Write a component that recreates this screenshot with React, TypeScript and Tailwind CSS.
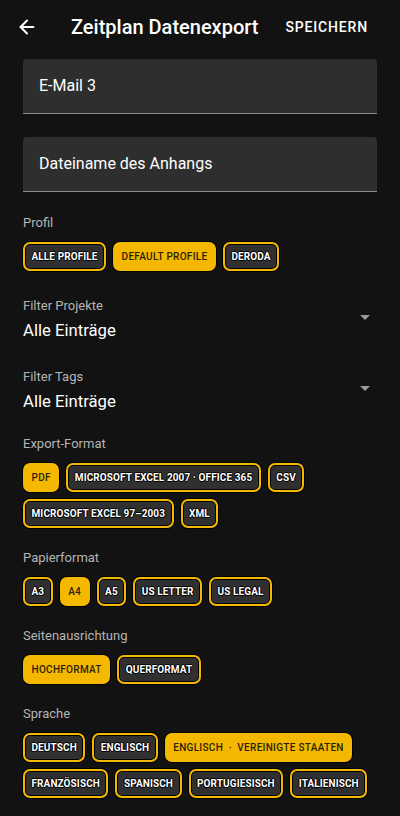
import { ArrowLeft } from "lucide-react"

const font = { fontFamily: "Roboto, 'Noto Sans', sans-serif" }

function Chip({ label, active }: { label: string; active?: boolean }) {
    if (active) {
        return (
            <span className="inline-flex h-[29px] items-center rounded-[7px] bg-[#f5b800] px-[8.5px] text-[10px] font-medium tracking-[0.03em] text-[#2b2300] shadow-[0_0_0_1px_#000] whitespace-pre">
                {label}
            </span>
        )
    }
    return (
        <span className="inline-flex h-[29px] items-center rounded-[7px] border-2 border-[#f5b800] bg-[#303030] px-[6.5px] text-[10px] font-bold tracking-[0.01em] text-white shadow-[inset_0_0_0_1px_#000,0_0_0_1px_#000] [text-shadow:-1px_0_#000,1px_0_#000,0_-1px_#000,0_1px_#000]">
            {label}
        </span>
    )
}

function Label({ children }: { children: string }) {
    return <div className="text-[13px] leading-[16px] text-[#b5b5b5]">{children}</div>
}

function Chips({ items, active }: { items: string[]; active: string }) {
    return (
        <div className="mt-[11px] flex flex-wrap gap-[7px]">
            {items.map((i) => (
                <Chip key={i} label={i} active={i === active} />
            ))}
        </div>
    )
}

function Dropdown({ label, value, className }: { label: string; value: string; className: string }) {
    return (
        <div className={"flex items-center " + className}>
            <div className="flex-1">
                <Label>{label}</Label>
                <div className="mt-[5px] text-[16.7px] leading-[24px] text-white">{value}</div>
            </div>
            <svg width="10" height="5" viewBox="0 0 10 5" className="mr-[7px] mb-[6px]">
                <path d="M0 0h10L5 5z" fill="#9a9a9a" />
            </svg>
        </div>
    )
}

export default function App() {
    return (
        <div className="min-h-[816px] w-[400px] bg-[#121212] pb-4" style={font}>
            <header className="flex h-[54px] items-center pl-4 pr-8">
                <ArrowLeft size={22} strokeWidth={2.2} className="text-white" />
                <h1 className="ml-[33px] flex-1 text-[20px] font-medium text-white">Zeitplan Datenexport</h1>
                <button className="text-[14px] font-medium tracking-[0.06em] text-white">SPEICHERN</button>
            </header>

            <div className="mt-[5px] px-[23px]">
                <div className="flex h-[55px] items-center rounded-t-[4px] border-b border-[#8a8a8a] bg-[#2e2e2e] px-4 text-[16px] text-white">
                    E-Mail 3
                </div>
                <div className="mt-[23px] flex h-[55px] items-center rounded-t-[4px] border-b border-[#8a8a8a] bg-[#2e2e2e] px-4 text-[16px] text-white">
                    Dateiname des Anhangs
                </div>

                <div className="mt-[23px]">
                    <Label>Profil</Label>
                    <Chips items={["ALLE PROFILE", "DEFAULT PROFILE", "DERODA"]} active="DEFAULT PROFILE" />
                </div>

                <Dropdown label="Filter Projekte" value="Alle Einträge" className="mt-[27px]" />
                <Dropdown label="Filter Tags" value="Alle Einträge" className="mt-[26px]" />

                <div className="mt-[22px]">
                    <Label>Export-Format</Label>
                    <Chips
                        items={["PDF", "MICROSOFT EXCEL 2007 · OFFICE 365", "CSV", "MICROSOFT EXCEL 97–2003", "XML"]}
                        active="PDF"
                    />
                </div>

                <div className="mt-[22px]">
                    <Label>Papierformat</Label>
                    <Chips items={["A3", "A4", "A5", "US LETTER", "US LEGAL"]} active="A4" />
                </div>

                <div className="mt-[22px]">
                    <Label>Seitenausrichtung</Label>
                    <Chips items={["HOCHFORMAT", "QUERFORMAT"]} active="HOCHFORMAT" />
                </div>

                <div className="mt-[22px]">
                    <Label>Sprache</Label>
                    <Chips
                        items={[
                            "DEUTSCH",
                            "ENGLISCH",
                            "ENGLISCH  ·  VEREINIGTE STAATEN",
                            "FRANZÖSISCH",
                            "SPANISCH",
                            "PORTUGIESISCH",
                            "ITALIENISCH",
                        ]}
                        active="ENGLISCH  ·  VEREINIGTE STAATEN"
                    />
                </div>
            </div>
        </div>
    )
}
